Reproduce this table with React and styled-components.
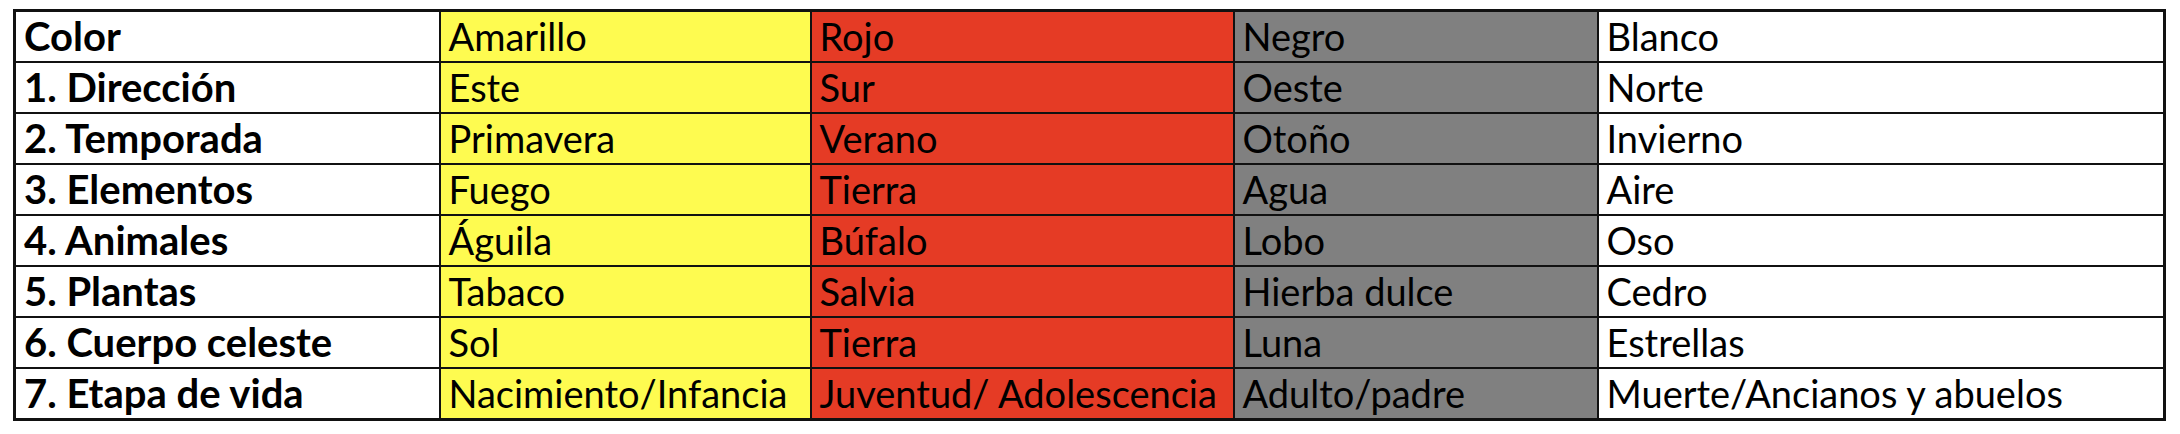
import React from 'react';
import styled, { createGlobalStyle } from 'styled-components';

const GlobalStyle = createGlobalStyle`
  body {
    margin: 0;
    background: #ffffff;
    font-family: Lato, "Liberation Sans", sans-serif;
  }
`;

const Page = styled.div`
  padding: 9px 0 0 13px;
`;

const Sheet = styled.table`
  border-collapse: collapse;
  table-layout: fixed;
  width: 2150px;
  border: 3px solid #111;
`;

const Cell = styled.td`
  height: 49px;
  padding: 0 0 0 8px;
  border: 2px solid #111;
  background: ${(p) => p.$fill || '#ffffff'};
  color: #000;
  font-size: ${(p) => (p.$head ? '40px' : '38px')};
  font-weight: ${(p) => (p.$head ? 700 : 400)};
  line-height: 47px;
  white-space: nowrap;
  overflow: hidden;
  vertical-align: middle;
`;

const FILLS = [null, '#fefb50', '#e53b25', '#808080', null];
const WIDTHS = [425, 371, 423, 364, 567];

const rows = [
  ['Color', 'Amarillo', 'Rojo', 'Negro', 'Blanco'],
  ['1. Dirección', 'Este', 'Sur', 'Oeste', 'Norte'],
  ['2. Temporada', 'Primavera', 'Verano', 'Otoño', 'Invierno'],
  ['3. Elementos', 'Fuego', 'Tierra', 'Agua', 'Aire'],
  ['4. Animales', 'Águila', 'Búfalo', 'Lobo', 'Oso'],
  ['5. Plantas', 'Tabaco', 'Salvia', 'Hierba dulce', 'Cedro'],
  ['6. Cuerpo celeste', 'Sol', 'Tierra', 'Luna', 'Estrellas'],
  ['7. Etapa de vida', 'Nacimiento/Infancia', 'Juventud/ Adolescencia', 'Adulto/padre', 'Muerte/Ancianos y abuelos'],
];

export default function App() {
  return (
    <>
      <GlobalStyle />
      <Page>
        <Sheet>
          <colgroup>
            {WIDTHS.map((w, i) => (
              <col key={i} style={{ width: w }} />
            ))}
          </colgroup>
          <tbody>
            {rows.map((row, r) => (
              <tr key={r}>
                {row.map((text, c) => (
                  <Cell key={c} $head={c === 0} $fill={FILLS[c]}>
                    {text}
                  </Cell>
                ))}
              </tr>
            ))}
          </tbody>
        </Sheet>
      </Page>
    </>
  );
}
